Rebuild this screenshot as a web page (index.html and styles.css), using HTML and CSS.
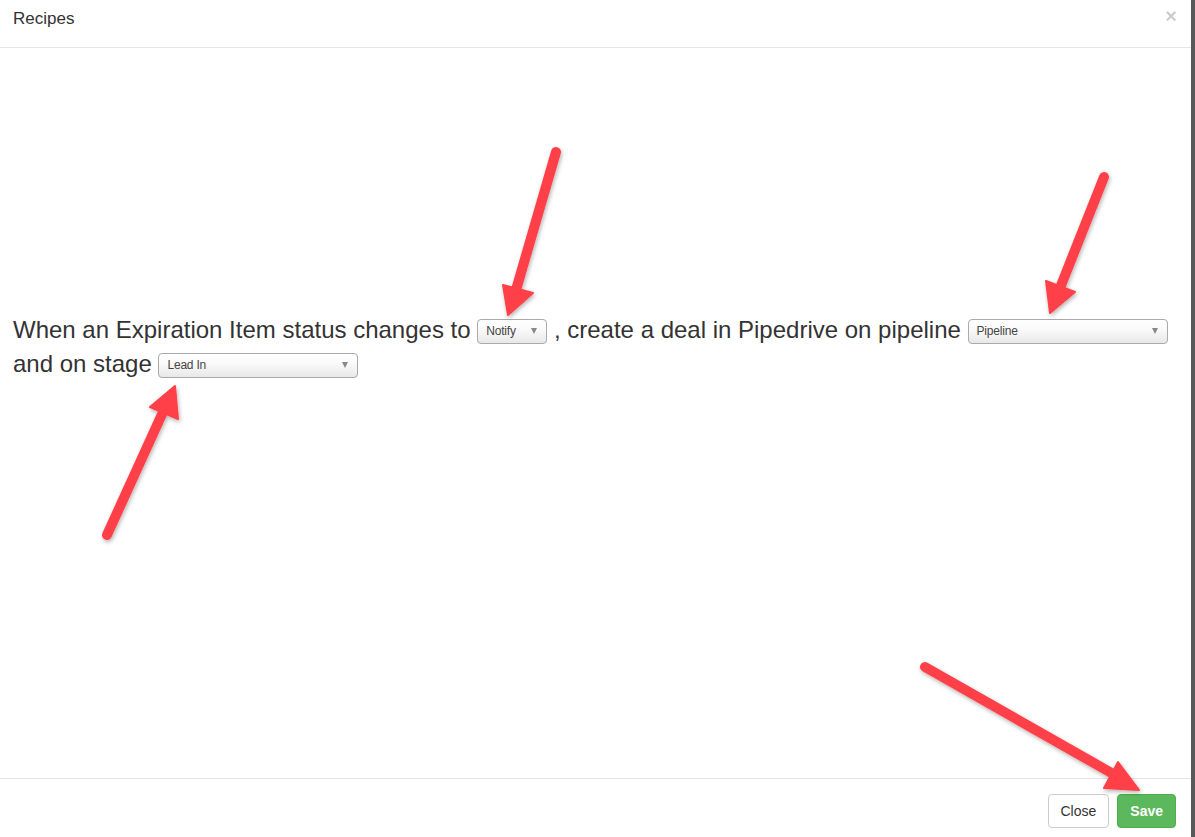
FILE: index.html
```html
<!DOCTYPE html>
<html lang="en">
<head>
  <meta charset="UTF-8">
  <meta name="viewport" content="width=device-width, initial-scale=1.0">
  <title>Recipes</title>
  <link rel="stylesheet" href="styles.css">
</head>
<body>
  <div class="screen">
    <div class="modal">
      <div class="modal-header">
        <h4 class="modal-title">Recipes</h4>
        <span class="close">&times;</span>
      </div>
      <div class="modal-body">
        <p class="recipe">
          When an Expiration Item status changes to
          <span class="select select-sm">Notify<i class="caret"></i></span>
          , create a deal in Pipedrive on pipeline
          <span class="select select-lg">Pipeline<i class="caret"></i></span>
          and on stage
          <span class="select select-lg">Lead In<i class="caret"></i></span>
        </p>
      </div>
      <div class="modal-footer">
        <button class="btn btn-default">Close</button>
        <button class="btn btn-success">Save</button>
      </div>
    </div>
    <div class="backdrop-edge"></div>

    <!-- annotation arrows -->
    <svg class="arrows" width="1195" height="837" viewBox="0 0 1195 837">
      <defs>
        <filter id="shadow" x="-20%" y="-20%" width="140%" height="140%">
          <feDropShadow dx="1" dy="2" stdDeviation="2" flood-color="#000" flood-opacity="0.3"/>
        </filter>
      </defs>
      <g filter="url(#shadow)" fill="#ff4148" stroke="#ff4148">
        <line x1="556" y1="152" x2="516" y2="290" stroke-width="10" stroke-linecap="round"/>
        <polygon points="503,285 533,293 508,315" stroke-width="2" stroke-linejoin="round"/>

        <line x1="1104" y1="177" x2="1060" y2="288" stroke-width="10" stroke-linecap="round"/>
        <polygon points="1046,281 1075,292 1050,313" stroke-width="2" stroke-linejoin="round"/>

        <line x1="107" y1="535" x2="163" y2="412" stroke-width="10" stroke-linecap="round"/>
        <polygon points="150,407 178,419 175,386" stroke-width="2" stroke-linejoin="round"/>

        <line x1="925" y1="667" x2="1115" y2="775" stroke-width="10" stroke-linecap="round"/>
        <polygon points="1118,762 1104,788 1139,790" stroke-width="2" stroke-linejoin="round"/>
      </g>
    </svg>
  </div>
</body>
</html>
```

FILE: styles.css
```css
* {
  margin: 0;
  padding: 0;
  box-sizing: border-box;
}
body {
  font-family: "Liberation Sans", Arial, Helvetica, sans-serif;
  color: #333;
  background-color: #fff;
}
.screen {
  position: relative;
  width: 1195px;
  height: 837px;
  display: flex;
  overflow: hidden;
}
.modal {
  width: 1191px;
  height: 837px;
  display: flex;
  flex-direction: column;
  background-color: #fff;
}
.backdrop-edge {
  flex: 1;
  background-color: #595959;
}
.modal-header {
  height: 48px;
  padding: 8px 15px 0 13px;
  border-bottom: 1px solid #e5e5e5;
  display: flex;
  justify-content: space-between;
}
.modal-title {
  font-size: 17px;
  font-weight: normal;
  line-height: 22px;
}
.close {
  font-size: 20px;
  font-weight: bold;
  line-height: 16px;
  color: #000;
  opacity: 0.2;
  margin-right: -1px;
}
.modal-body {
  flex: 1;
  padding: 265px 15px 0 13px;
}
.recipe {
  font-size: 24px;
  line-height: 34px;
}
.select {
  display: inline-flex;
  align-items: center;
  justify-content: space-between;
  height: 25px;
  padding: 0 9px 0 8px;
  border: 1px solid #aaa;
  border-radius: 4px;
  background: linear-gradient(to bottom, #fff 0%, #fafafa 40%, #e8e8e8 100%);
  font-size: 12px;
  color: #444;
  vertical-align: 3px;
  letter-spacing: -0.2px;
}
.select-sm {
  width: 70px;
}
.select-lg {
  width: 200px;
}
.caret {
  width: 0;
  height: 0;
  border-left: 3.5px solid transparent;
  border-right: 3.5px solid transparent;
  border-top: 6px solid #888;
}
.modal-footer {
  height: 59px;
  padding: 15px 15px 0 0;
  border-top: 1px solid #e5e5e5;
  display: flex;
  justify-content: flex-end;
  align-items: flex-start;
  gap: 8px;
}
.btn {
  height: 34px;
  padding: 0 12px;
  font-family: "Liberation Sans", Arial, Helvetica, sans-serif;
  font-size: 14px;
  border-radius: 4px;
  border: 1px solid #ccc;
  background-color: #fff;
  color: #333;
}
.btn-success {
  background-color: #5cb85c;
  border-color: #4cae4c;
  color: #fff;
  font-weight: bold;
}
.arrows {
  position: absolute;
  left: 0;
  top: 0;
  pointer-events: none;
}
```
